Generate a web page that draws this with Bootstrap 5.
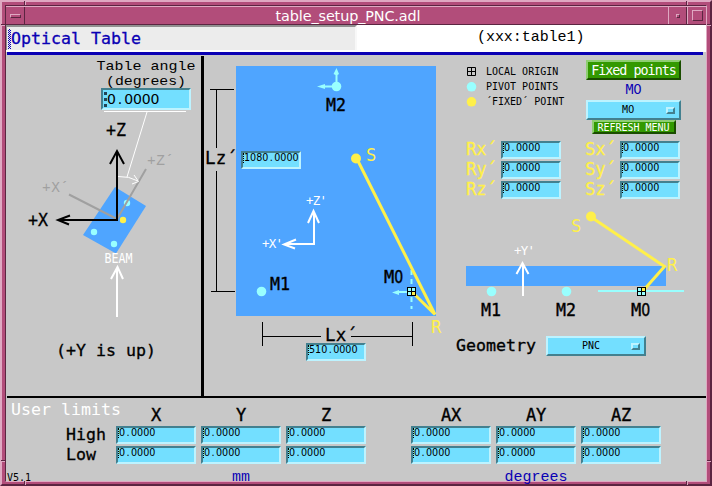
<!DOCTYPE html>
<html lang="en">
<head>
<meta charset="utf-8">
<title>table_setup_PNC.adl</title>
<link href="https://cdn.jsdelivr.net/npm/bootstrap@5.3.0/dist/css/bootstrap.min.css" rel="stylesheet">
<style>
body{font-family:"DejaVu Sans Mono","Liberation Mono",monospace;font-size:16.6px;line-height:1;color:#000;background:#b24d7a;width:712px;height:486px;overflow:hidden}
.win{width:712px;height:486px;border:2px solid;border-color:#dfa9c2 #5b2541 #5b2541 #dfa9c2;background:#b24d7a;padding:3px 3px 2px 3px;position:relative}
.pane{border:1px solid;border-color:#5b2541 #dfa9c2 #dfa9c2 #5b2541;height:477px;background:#c8c8c8}
.titlebar{height:19px;background:#b24d7a;color:#fff;border-top:1px solid #dfa9c2;border-bottom:1px solid #5b2541}
.titlebar .wbtn{width:19px;height:17px;border-left:1px solid #dfa9c2;border-right:1px solid #5b2541}
.titlebar .cap{font:14.4px/18px "DejaVu Sans",sans-serif;letter-spacing:-.12px;padding-left:3px}
.bar{width:11px;height:4px}.mini{width:4px;height:4px}.maxi{width:11px;height:11px}
.out{border:1px solid;border-color:#dfa9c2 #5b2541 #5b2541 #dfa9c2}
.notch{position:absolute;background:#5b2541}
.notch.hz{width:4px;height:2px;border-bottom:1px solid #dfa9c2}
.notch.vt{width:2px;height:4px;border-right:1px solid #dfa9c2}
.head{height:27px;background:#fff}
.head .name{width:351px;height:25px;background:#ececec;border-top:2px solid #909090;border-left:1px solid #909090;color:#0a00b4;padding-left:4px;line-height:23px;border-right:2px solid #f8f8f8;-webkit-text-stroke:.3px #0a00b4}
.head .pv{font:15px/25px "Liberation Mono",monospace;padding-left:120px;letter-spacing:-.05px}
.caret{width:3px;height:20px;background:repeating-conic-gradient(#0a00b4 0 25%,transparent 0 50%) 0 0/2px 2px;display:inline-block;vertical-align:top;margin-top:2px;margin-left:-3px}
.rule{height:3px;background:#0a00b4;margin:0 3px 0 1px}
.main{height:341px}
.wall{width:3px;background:#000;margin-top:1px}
svg{display:block;flex:none}
svg text{white-space:pre}
.thin{font-family:"Liberation Mono",monospace}
.fld{background:#73dfff;border:2px solid;border-color:#43808f #bdf3ff #bdf3ff #43808f;width:60px;height:18px;font:9.6px/9px "DejaVu Sans",sans-serif;padding-left:1px;white-space:nowrap;position:relative}
.fld:before{content:"";position:absolute;left:0;top:0;height:10px;border-left:1px dotted #000}
.fld .pt{padding:0 1.4px}
.wide{width:80px}
.big{width:90px;height:22px;font-size:14px;line-height:18px;padding-left:4px;letter-spacing:-.15px}
.big:before{left:1px;top:2px;height:15px;border-left:3px dotted #245}
.big .pt{padding:0 2.1px}
.over{position:absolute}
.menu{background:#73dfff;border:2px solid;border-color:#bdf3ff #43808f #43808f #bdf3ff;font-size:10px;height:20px}
.knob{width:9px;height:7px;border:2px solid;border-color:#bdf3ff #43808f #43808f #bdf3ff}
.grn{background:#390;color:#fff;border:2px solid;border-color:#8fce72 #1a4d00 #1a4d00 #8fce72;border-radius:0;padding:0;font-size:13.4px;line-height:15px;letter-spacing:-1px;height:20px}
.grn.sm{height:14px;font-size:10px;line-height:9px;letter-spacing:0;width:84px}
.legend{font-size:10px;padding:9px 0 0 15px;width:136px}
.legend div{height:15px;gap:8px}
.ctl{width:95px;padding-top:5px}
.zero{font-family:"DejaVu Sans",sans-serif}
.fixedname{color:#0a00b4;font-size:13.3px;height:20px;letter-spacing:-.3px}
.yl{color:#fff04a;width:35px;font-size:17px;-webkit-text-stroke:.3px #fff04a}
.vals{padding:7px 0 0 16px;gap:24px}
.vals .set{gap:2px}
.geo{height:20px;padding-left:6px;margin-top:11px;-webkit-text-stroke:.35px #000}
.geo .menu{width:100px;margin-left:10px;-webkit-text-stroke:0}
.limits{border-top:2px solid #000;margin-left:1px;height:85px}
.lgrid{display:grid;grid-template-columns:104px 80px 80px 80px 35px 80px 80px 80px;column-gap:5px;grid-template-rows:26px 18px 18px 19px;row-gap:2px}
.lgrid .hd{text-align:center;-webkit-text-stroke:.4px #000;align-self:end;font-size:17px;letter-spacing:-.2px}
.lgrid .unit{color:#0a00b4;font-size:15px;font-family:"Liberation Mono",monospace;text-align:center;padding-top:4px}
.side{-webkit-text-stroke:.3px #000;padding-left:59px;padding-top:1px}
</style>
<script src="https://cdn.jsdelivr.net/npm/bootstrap@5.3.0/dist/js/bootstrap.bundle.min.js"></script>
</head>
<body>
<div class="win">
<i class="notch hz" style="left:-1px;top:22px"></i><i class="notch vt" style="left:22px;top:-1px"></i>
<i class="notch vt" style="right:22px;top:-1px"></i><i class="notch hz" style="right:-1px;top:22px"></i>
<i class="notch hz" style="left:-1px;bottom:22px"></i><i class="notch hz" style="right:-1px;bottom:22px"></i>
<i class="notch vt" style="left:22px;bottom:-1px"></i><i class="notch vt" style="right:22px;bottom:-1px"></i>
<div class="pane">
  <div class="titlebar d-flex">
    <div class="wbtn border-start-0 d-flex align-items-center justify-content-center"><div class="bar out"></div></div>
    <div class="cap flex-fill text-center">table_setup_PNC.adl</div>
    <div class="wbtn d-flex align-items-center justify-content-center"><div class="mini out"></div></div>
    <div class="wbtn border-end-0 d-flex align-items-center justify-content-center"><div class="maxi out"></div></div>
  </div>
  <div class="head d-flex">
    <div class="name"><span class="caret"></span>Optical Table</div>
    <div class="pv">(xxx:table1)</div>
  </div>
  <div class="rule"></div>

  <div class="main d-flex">
    <div class="position-relative">
      <svg width="195" height="341" viewBox="6 55 195 341">
        <g font-size="13.500" class="thin"><text x="96.500" y="70" textLength="99" lengthAdjust="spacingAndGlyphs">Table angle</text>
        <text x="106" y="84.500" textLength="80" lengthAdjust="spacingAndGlyphs">(degrees)</text></g>
        <path d="M115 187L146 206L116 253.500L83 235Z" fill="#4fa5ff"/>
        <g fill="#99ffff"><circle cx="127" cy="203" r="3.200"/><circle cx="94" cy="232" r="3.200"/><circle cx="114" cy="244" r="3.200"/></g>
        <path d="M117 219L146 169M117 219L69 194.500" stroke="#a0a0a0" stroke-width="2" fill="none"/>
        <circle cx="123" cy="220" r="3.200" fill="#fff04a"/>
        <path d="M104 111.500H186M147 112L127 177M118 176.500Q129 176 138 181M132 184L138.500 181.500L134 175" stroke="#fff" fill="none"/>
        <path d="M117 151V220H58M110 164L117 151L124 164M70 215.500L58 220L69 224.500" stroke="#000" stroke-width="2" fill="none"/>
        <path d="M117 268V317M111 279L117.500 267L123 279" stroke="#fff" stroke-width="2" fill="none"/>
        <g stroke="#000" stroke-width=".3" font-size="17.500"><text x="106" y="135.500" textLength="20" lengthAdjust="spacingAndGlyphs">+Z</text>
        <text x="28" y="225.500" textLength="20" lengthAdjust="spacingAndGlyphs">+X</text>
        <text x="56" y="356" font-size="16.600" textLength="100">(+Y is up)</text></g>
        <g fill="#a0a0a0" font-size="14.500" class="thin"><text x="147" y="165" textLength="27">+Z´</text><text x="42" y="192" textLength="27">+X´</text></g>
        <text x="104.500" y="263" fill="#fff" font-size="13.300" textLength="28" lengthAdjust="spacingAndGlyphs">BEAM</text>
      </svg>
      <div class="fld big over" style="left:95px;top:33px">0<span class="pt">.</span>0000</div>
    </div>
    <div class="wall"></div>
    <div class="position-relative">
      <svg width="246" height="341" viewBox="204 55 246 341">
        <rect x="236" y="66" width="200" height="250" fill="#4fa5ff"/>
        <path d="M210 89.500H234M216.500 89V148M216.500 171V292M211 291.500H235M262.500 322V346M412.500 322V346M262 336.500H321M351 336.500H412" stroke="#000" fill="none"/>
        <g fill="#99ffff"><circle cx="336.500" cy="86.500" r="4.800"/><circle cx="261.500" cy="291.500" r="4.800"/>
          <path d="M335.500 86V75L333.500 74L336.500 68L339 74L337.500 75V86ZM336 85.500H325V84L317 86.500L325 89V87.500H336ZM407 291H399V290L392 292.500L399 295V293H407Z"/></g>
        <path d="M411.500 270V309" stroke="#99ffff" stroke-width="2" stroke-dasharray="5 4" fill="none"/>
        <path d="M356.500 158L435 314.500L412 292" stroke="#fff04a" stroke-width="3" fill="none"/>
        <circle cx="356" cy="158.500" r="5" fill="#fff04a"/>
        <rect x="407.500" y="287.500" width="8" height="8" fill="#99ffff" stroke="#000"/><rect x="412" y="292" width="3" height="3" fill="#fff04a"/><path d="M411.500 287V296M407 291.500H416" stroke="#000"/>
        <path d="M314 212V244H285M308 223L313.500 211L319 223M296 239.500L284 244.500L295 248.500" stroke="#fff" stroke-width="2" fill="none"/>
        <g stroke="#000" stroke-width=".4" font-size="17.800">
          <text x="326" y="111" textLength="20" lengthAdjust="spacingAndGlyphs">M2</text><text x="270" y="290" textLength="20" lengthAdjust="spacingAndGlyphs">M1</text><text x="384" y="283" font-size="17">M<tspan class="zero" textLength="9" lengthAdjust="spacingAndGlyphs">0</tspan></text></g>
        <g font-size="17.500" stroke="#000" stroke-width=".3"><text x="205" y="164" textLength="32">Lz´</text><text x="325" y="341" textLength="32">Lx´</text></g>
        <g fill="#fff" font-size="12.500"><text x="306" y="205" textLength="21">+Z'</text><text x="262" y="248" textLength="21">+X'</text></g>
        <g fill="#fff04a" font-size="17"><text x="366" y="161">S</text><text x="431" y="333">R</text></g>
      </svg>
      <div class="fld over" style="left:37px;top:96px">1080<span class="pt">.</span>0000</div>
      <div class="fld over" style="left:102px;top:288px">510<span class="pt">.</span>0000</div>
    </div>

    <div class="flex-fill">
      <div class="d-flex">
        <div class="legend">
          <div class="d-flex align-items-center"><svg width="13" height="13"><path d="M2.500 2.500H10.500V10.500H2.500ZM6.500 2V11M2 6.500H11" fill="none" stroke="#000"/></svg>LOCAL ORIGIN</div>
          <div class="d-flex align-items-center"><svg width="13" height="13"><circle cx="6.500" cy="6.800" r="4.800" fill="#99ffff"/></svg>PIVOT POINTS</div>
          <div class="d-flex align-items-center"><svg width="13" height="13"><circle cx="6.500" cy="6.800" r="4.800" fill="#fff04a"/></svg>´FIXED´ POINT</div>
        </div>
        <div class="ctl d-flex flex-column">
          <button class="btn grn">Fixed points</button>
          <div class="fixedname d-flex align-items-center justify-content-center">M<span class="zero">0</span></div>
          <div class="menu d-flex align-items-center"><span class="me-auto ps-4 ms-1">&nbsp;M<span class="zero">0</span></span><span class="knob me-1"></span></div>
          <button class="btn grn sm mx-auto">REFRESH MENU</button>
        </div>
      </div>
      <div class="vals d-flex">
        <div class="set d-flex flex-column">
          <div class="d-flex"><span class="yl">Rx´</span><div class="fld">0<span class="pt">.</span>0000</div></div>
          <div class="d-flex"><span class="yl">Ry´</span><div class="fld">0<span class="pt">.</span>0000</div></div>
          <div class="d-flex"><span class="yl">Rz´</span><div class="fld">0<span class="pt">.</span>0000</div></div>
        </div>
        <div class="set d-flex flex-column">
          <div class="d-flex"><span class="yl">Sx´</span><div class="fld">0<span class="pt">.</span>0000</div></div>
          <div class="d-flex"><span class="yl">Sy´</span><div class="fld">0<span class="pt">.</span>0000</div></div>
          <div class="d-flex"><span class="yl">Sz´</span><div class="fld">0<span class="pt">.</span>0000</div></div>
        </div>
      </div>
      <svg width="256" height="126" viewBox="450 199 256 126">
        <rect x="466" y="266" width="200" height="20" fill="#4fa5ff"/>
        <path d="M598 291H684" stroke="#99ffff" stroke-width="2"/>
        <g fill="#99ffff"><circle cx="491.500" cy="291.500" r="4.800"/><circle cx="566.500" cy="291.500" r="4.800"/></g>
        <path d="M591 217L664.500 266.500L642 292" stroke="#fff04a" stroke-width="3" fill="none"/><circle cx="591" cy="216.500" r="5" fill="#fff04a"/>
        <rect x="637.500" y="287.500" width="8" height="8" fill="#99ffff" stroke="#000"/><rect x="642" y="288" width="3" height="3" fill="#fff04a"/><path d="M641.500 287V296M637 291.500H646" stroke="#000"/>
        <path d="M523 264V296M516.500 274L522.500 263L528.500 274" stroke="#fff" stroke-width="2" fill="none"/>
        <g stroke="#000" stroke-width=".4" font-size="17.800"><text x="481" y="316" textLength="20" lengthAdjust="spacingAndGlyphs">M1</text><text x="556" y="316" textLength="20" lengthAdjust="spacingAndGlyphs">M2</text><text x="631" y="316" font-size="17">M<tspan class="zero" textLength="9" lengthAdjust="spacingAndGlyphs">0</tspan></text></g>
        <text x="514" y="255" fill="#fff" font-size="12.500" textLength="21">+Y'</text>
        <g fill="#fff04a" font-size="17"><text x="571" y="231.500">S</text><text x="667" y="271">R</text></g>
      </svg>
      <div class="geo d-flex align-items-center">Geometry<div class="menu d-flex align-items-center"><span class="me-auto ps-4 ms-1">&#8201;PNC</span><span class="knob me-1"></span></div></div>
    </div>
  </div>

  <div class="limits">
    <div class="lgrid">
      <div class="text-white ps-1 pt-1 text-nowrap">User limits</div><div class="hd">X</div><div class="hd">Y</div><div class="hd">Z</div><div></div><div class="hd">AX</div><div class="hd">AY</div><div class="hd">AZ</div>
      <div class="side">High</div><div class="fld wide">0<span class="pt">.</span>0000</div><div class="fld wide">0<span class="pt">.</span>0000</div><div class="fld wide">0<span class="pt">.</span>0000</div><div></div><div class="fld wide">0<span class="pt">.</span>0000</div><div class="fld wide">0<span class="pt">.</span>0000</div><div class="fld wide">0<span class="pt">.</span>0000</div>
      <div class="side">Low</div><div class="fld wide">0<span class="pt">.</span>0000</div><div class="fld wide">0<span class="pt">.</span>0000</div><div class="fld wide">0<span class="pt">.</span>0000</div><div></div><div class="fld wide">0<span class="pt">.</span>0000</div><div class="fld wide">0<span class="pt">.</span>0000</div><div class="fld wide">0<span class="pt">.</span>0000</div>
      <div style="font-size:10px;padding-top:7px">V5.1</div><div></div><div class="unit">mm</div><div></div><div></div><div></div><div class="unit">degrees</div>
    </div>
  </div>
</div>
</div>
</body>
</html>
